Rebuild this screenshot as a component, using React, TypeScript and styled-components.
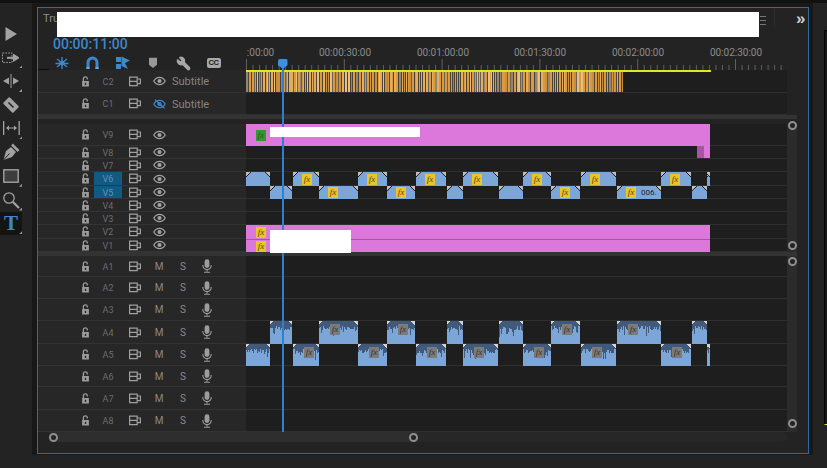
import React from "react";
import styled, { createGlobalStyle } from "styled-components";
import { Wrench } from "lucide-react";

const GlobalStyle = createGlobalStyle`
  html, body { margin: 0; padding: 0; background: #181818; }
  * { box-sizing: border-box; }
`;

const FONT = `Roboto, "Liberation Sans", sans-serif`;
const BLUE = "#3f87cc";
const GREY = "#a2a2a2";

const Page = styled.div`
  width: 827px; height: 468px; overflow: hidden;
  display: flex; flex-direction: column;
  background: #181818; font-family: ${FONT};
`;
const TopStrip = styled.div`
  height: 3px; flex: none; background: #111;
`;
const Main = styled.div`
  flex: none; height: 452px; display: flex;
`;
const BottomBar = styled.div`
  flex: 1; background: #232323;
`;

/* Tool rail */
const Rail = styled.nav`
  width: 32px; flex: none; margin-right: 5px; padding-top: 19px;
  background: #232323;
  display: flex; flex-direction: column;
`;
const Tool = styled.div<{ $active?: boolean; $corner?: boolean }>`
  width: 22px; height: 23.7px; position: relative;
  display: flex; align-items: center; justify-content: center;
  background: ${(p) => (p.$active ? "#141414" : "transparent")};
  &::after {
    content: ${(p) => (p.$corner ? '""' : "none")};
    position: absolute; right: 0; bottom: 1px;
    width: 3px; height: 3px; background: #999;
    clip-path: polygon(100% 0, 100% 100%, 0 100%);
  }
`;
const TextTool = styled.span`
  font: bold 21px "Liberation Serif", serif; color: ${BLUE}; line-height: 1;
`;

/* Panel */
const Panel = styled.section`
  width: 772px; height: 447px; flex: none; margin-top: 4px;
  border: 1px solid #2d6ca3; background: #232323;
  display: flex; flex-direction: column;
`;
const PanelHeader = styled.header`
  height: 29px; flex: none; padding: 4px 0 0 5px;
  display: flex; align-items: flex-start;
`;
const PanelTitle = styled.span`
  width: 14px; flex: none; font-size: 11px; line-height: 14px; color: #8d8d8d; white-space: nowrap;
`;
const Redaction = styled.div`
  width: 702px; height: 25px; background: #fff; flex: none;
`;
const MenuLines = styled.div`
  width: 6px; height: 9px; margin: 4px 0 0 1px; flex: none;
  border-top: 1px solid #777; border-bottom: 1px solid #777; position: relative;
  &::after { content: ""; position: absolute; left: 0; right: 0; top: 3px; height: 1px; background: #777; }
`;
const HeaderRule = styled.div`
  width: 1px; height: 19px; margin: -4px 0 0 8px; background: #2c2c2c; flex: none;
`;
const Overflow = styled.span`
  margin: -3px 0 0 21px; font: bold 17px/20px "Liberation Sans", sans-serif; color: #cfcfcf;
`;

const Timeline = styled.div`
  position: relative; flex: none;
`;
const TimeRow = styled.div`
  height: 33px; display: flex; position: relative;
  &::before { content: ""; position: absolute; left: 0; bottom: 0; width: 11px; height: 1px; background: #0c0c0c; }
`;
const TimeControls = styled.div`
  width: 208px; flex: none; padding-left: 15px;
`;
const Timecode = styled.div`
  color: ${BLUE}; font-size: 14px; font-weight: 500; line-height: 14px;
`;
const ControlIcons = styled.div`
  margin-top: 4px; margin-left: -6px; display: flex; align-items: center;
`;
const ControlIcon = styled.div`
  width: 30.3px; height: 16px; flex: none; display: flex; align-items: center; justify-content: center;
`;
const CCBadge = styled.span`
  width: 14px; height: 10px; border-radius: 2px; background: #a8a8a8;
  color: #222; font: bold 7.5px/10px "Liberation Sans", sans-serif; text-align: center; letter-spacing: -.2px;
`;
const Ruler = styled.div`
  width: 541px; flex: none; position: relative; overflow: hidden;
`;
const RulerLabel = styled.span`
  position: absolute; top: 10px; transform: translateX(-50%);
  font-size: 10px; line-height: 12px; color: #8c8c8c; white-space: nowrap;
`;
const RulerTicks = styled.svg`
  position: absolute; left: 0; bottom: 0; display: block;
`;

const Section = styled.div`
  display: flex; flex: none;
`;
const Rows = styled.div`
  width: 749px; flex: none; display: flex; flex-direction: column;
`;
const Gutter = styled.div`
  width: 10px; flex: none; background: #2b2b2b;
  display: flex; flex-direction: column; justify-content: space-between; align-items: center;
`;
const Knob = styled.span`
  display: block; width: 9px; height: 9px; flex: none; border-radius: 50%;
  border: 2px solid #8f8f8f; background: #232323;
`;
const TopKnob = styled(Knob)<{ $gap: number }>`
  margin-top: ${(p) => p.$gap}px;
`;
const BottomKnob = styled(Knob)<{ $gap: number }>`
  margin-bottom: ${(p) => p.$gap}px;
`;
const Band = styled.div<{ $h: number }>`
  height: ${(p) => p.$h}px; flex: none; width: 759px;
  border-top: 4px solid #333;
`;

const Row = styled.div<{ $h: number }>`
  height: ${(p) => p.$h}px; display: flex; flex: none;
`;
const Head = styled.div`
  width: 208px; flex: none; padding-left: 36px;
  background: #272727; border-bottom: 1px solid #333;
  display: flex; align-items: center;
`;
const Lane = styled.div`
  width: 541px; flex: none; position: relative;
  background: #1e1e1e; border-bottom: 1px solid #2f2f2f;
`;
const LockCell = styled.div`
  width: 20px; flex: none; padding-left: 7px; display: flex;
`;
const TrackLabel = styled.div<{ $on?: boolean }>`
  width: 28px; height: 100%; flex: none; text-align: center;
  display: flex; align-items: center; justify-content: center;
  font-size: 9px; padding-top: 1px; color: ${(p) => (p.$on ? "#5d93b4" : "#6e6e6e")};
  background: ${(p) => (p.$on ? "#135a83" : "transparent")};
`;
const CamCell = styled.div`
  width: 24px; flex: none; margin-left: 1px; display: flex; justify-content: center;
`;
const ToggleCell = styled.div`
  width: 24px; flex: none; display: flex; justify-content: center; align-items: center;
  font-size: 10px; color: #8a8a8a;
`;
const TrackName = styled.span`
  font-size: 11px; color: #858585; margin-left: 1px; padding-top: 1px;
`;

/* Clips */
const Clip = styled.div`
  position: absolute; top: 0; bottom: -1px; overflow: hidden;
  display: flex; align-items: center;
  background: #7ca5d8;
  &::before, &::after {
    content: ""; position: absolute; top: 0; width: 6px; height: 6px; z-index: 1;
  }
  &::before { left: 0; background: linear-gradient(135deg, #bdbdbd 34%, #1e1e1e 34% 44%, transparent 44%); }
  &::after { right: 0; background: linear-gradient(225deg, #bdbdbd 34%, #1e1e1e 34% 44%, transparent 44%); }
`;
const AudioClipBox = styled(Clip)`
  &::before, &::after { width: 4px; height: 4px; }
  &::before { background: linear-gradient(135deg, #d4d4d4 50%, transparent 50%); }
  &::after { background: linear-gradient(225deg, #d4d4d4 50%, transparent 50%); }
`;
const Fx = styled.span<{ $tone: "yellow" | "green" | "grey" }>`
  width: 10px; height: 11px; flex: none; position: relative; z-index: 1;
  font: italic 9px/11px "Liberation Serif", serif; text-align: center;
  color: ${(p) => (p.$tone === "grey" ? "#333" : "#5a4700")};
  background: ${(p) => (p.$tone === "yellow" ? "#e6c52f" : p.$tone === "green" ? "#2b9a34" : "#7b7b7b")};
`;
const ClipFx = styled(Fx)`
  margin-left: 9px;
`;
const AudioFx = styled(Fx)`
  align-self: flex-start; margin: 3px 0 0 11px;
`;
const ClipName = styled.span`
  margin-left: 5px; font-size: 8px; color: #15233a;
`;
const Wave = styled.svg`
  position: absolute; left: 0; top: 0; display: block;
`;
const PinkClip = styled.div`
  position: absolute; left: 0; width: 464px; top: 0; bottom: -1px;
  background: #dc78dc; padding-left: 10px;
  display: flex; align-items: center;
`;
const PinkLower = styled(PinkClip)`
  border-top: 1px solid #a4579f;
`;
const PinkTail = styled.div`
  position: absolute; left: 451px; width: 13px; top: 0; bottom: 0;
  background: linear-gradient(90deg, #a856a4 54%, #dc78dc 54%);
`;
const Mask = styled.div`
  position: absolute; background: #fff; z-index: 3;
`;
const TitleMask = styled(Mask)`
  left: 24px; top: 3px; width: 150px; height: 10px;
`;
const StackMask = styled(Mask)`
  left: 24px; top: 5px; width: 81px; height: 23px;
`;
const Stripes = styled.svg`
  position: absolute; left: 0; top: 0; display: block;
`;

const Playhead = styled.div`
  position: absolute; left: 244px; top: 22px; width: 1.5px; height: 373px; background: #2f7fd1; z-index: 2;
`;
const PlayheadFlag = styled.div`
  position: absolute; left: -4px; top: 0; width: 9.5px; height: 9px; background: #3d8fe0; border-radius: 2px 2px 0 0;
  clip-path: polygon(0 0, 100% 0, 100% 70%, 60% 100%, 40% 100%, 0 70%);
`;

/* Horizontal scrollbar */
const HScroll = styled.div`
  height: 10px; margin-left: 11px; width: 738px; flex: none; display: flex; background: #272727; border-radius: 0 5px 5px 0;
`;
const HThumb = styled.div`
  width: 369px; flex: none; background: #2e2e2e; display: flex; justify-content: space-between; align-items: center;
`;

/* Right dock */
const RightDock = styled.aside`
  flex: 1; margin-left: 4px; background: #232323; padding: 27px 0 0 11px;
`;
const DockFrame = styled.div`
  height: 395px; background: #161616; border-left: 1px solid #050505; border-top: 1px solid #050505; border-bottom: 1px solid #e4e43a;
`;

/* ---------- icons ---------- */
const Lock = () => (
  <svg width="9" height="11" viewBox="0 0 10 13">
    <path d="M2.500 6V3.200a2.300 2.300 0 0 1 4.600 0V4" fill="none" stroke="#9c9c9c" strokeWidth="1.500" />
    <path fillRule="evenodd" d="M1 6h8v6.500H1z M4.200 8v2.500h1.600V8z" fill="#9c9c9c" />
  </svg>
);
const Cam = () => (
  <svg width="12" height="11" viewBox="0 0 12 11" fill="none" stroke="#a0a0a0" strokeWidth="1.200">
    <path d="M.6 1.200h7.600v8.400H.6zM.6 5.400h7.600M8.200 3h3.200v4.600H8.200" />
  </svg>
);
const Eye = ({ off }: { off?: boolean }) => {
  const c = off ? "#3d86c8" : "#a2a2a2";
  return (
    <svg width="13" height="10" viewBox="0 0 13 10">
      <path d="M.8 5C2.200 2.600 4.200 1.400 6.500 1.400S10.800 2.600 12.200 5C10.800 7.400 8.800 8.600 6.500 8.600S2.200 7.400.8 5z" fill="none" stroke={c} strokeWidth="1.300" />
      <circle cx="6.500" cy="5" r="2.100" fill={c} />
      {off && <path d="M2 .8l9.500 8.400" stroke={c} strokeWidth="1.300" />}
    </svg>
  );
};
const Mic = () => (
  <svg width="10" height="14" viewBox="0 0 10 14">
    <rect x="2.600" y=".3" width="4.800" height="8.600" rx="2.400" fill="#9c9c9c" />
    <path d="M.8 6c0 3 1.800 4.600 4.200 4.600S9.200 9 9.200 6M5 10.600v2M2 13.200h6" fill="none" stroke="#9c9c9c" strokeWidth="1.100" />
  </svg>
);

const toolIcons: { node: React.ReactNode; corner?: boolean; active?: boolean }[] = [
  { node: <svg width="14" height="16" viewBox="0 0 14 16"><path d="M1.500 1v14L13 8z" fill={GREY} /></svg> },
  { corner: true, node: (
    <svg width="18" height="12" viewBox="0 0 18 12" fill="none" stroke={GREY}>
      <rect x=".5" y="1" width="9.500" height="9.500" strokeDasharray="1.600 1.300" />
      <path d="M5 5.800h7" strokeWidth="2" /><path d="M11.500 2.300l5.500 3.500-5.500 3.500z" fill={GREY} />
    </svg>) },
  { corner: true, node: (
    <svg width="18" height="14" viewBox="0 0 18 14" fill={GREY}>
      <path d="M8.500 0h1v14h-1zM7 3.500v7L1 7zM11 3.500v7L17 7z" />
    </svg>) },
  { node: (
    <svg width="18" height="18" viewBox="0 0 18 18">
      <rect x="4.500" y="2" width="9" height="14" rx="1" fill={GREY} transform="rotate(-45 9 9)" />
      <path d="M6.500 6.500l5 5" stroke="#232323" strokeWidth="1.500" />
    </svg>) },
  { corner: true, node: (
    <svg width="19" height="16" viewBox="0 0 19 16" fill={GREY}>
      <path d="M1 0h1.300v14H1zM16.500 0h1.300v14h-1.300zM4 7l3-2.500v2h5v-2L15 7l-3 2.500v-2H7v2z" />
    </svg>) },
  { node: (
    <svg width="18" height="18" viewBox="0 0 18 18">
      <path d="M1.500 17L4 8l5-4 5 5-4 5z" fill={GREY} />
      <path d="M10 1.500L16.500 8" stroke={GREY} strokeWidth="2.500" />
      <path d="M1.500 17L7.500 10.500" stroke="#232323" strokeWidth="1" />
    </svg>) },
  { corner: true, node: <svg width="16" height="14" viewBox="0 0 16 14"><rect x=".8" y=".8" width="14.400" height="12.400" fill="#3d3d3d" stroke={GREY} strokeWidth="1.400" /></svg> },
  { corner: true, node: (
    <svg width="18" height="18" viewBox="0 0 18 18" fill="none" stroke={GREY}>
      <circle cx="7" cy="7" r="5.200" strokeWidth="1.300" /><path d="M11 11l6 6" strokeWidth="2.200" />
    </svg>) },
  { corner: true, active: true, node: <TextTool>T</TextTool> },
];

const controls: React.ReactNode[] = [
  <svg width="14" height="14" viewBox="0 0 14 14" stroke={BLUE} strokeWidth="1.300" fill={BLUE}>
    <path d="M7 1v12M2 3l10 8M2 11L12 3M.5 7.500h13" fill="none" /><circle cx="7" cy="7" r="1.800" />
  </svg>,
  <svg width="13" height="14" viewBox="0 0 13 14" fill="none">
    <path d="M2 13V6.500a4.500 4.500 0 0 1 9 0V13" stroke={BLUE} strokeWidth="3" />
    <path d="M.5 12h3M9.500 12h3" stroke="#6aa9e6" strokeWidth="2" />
  </svg>,
  <svg width="14" height="14" viewBox="0 0 14 14" fill={BLUE}>
    <path d="M0 1h5v5H0zM0 8h5v5H0zM5.500 .5L14 4.500 9 7l3 6-6.500-3z" />
  </svg>,
  <svg width="10" height="12" viewBox="0 0 10 12" fill="#989898"><path d="M1 .8h8v7L5 11 1 7.800z" /></svg>,
  <Wrench size={15} color="#a8a8a8" fill="#a8a8a8" style={{ transform: "scaleX(-1)" }} />,
  <CCBadge>CC</CCBadge>,
];

/* ---------- data ---------- */
const rng = (seed: number) => () => {
  seed = (seed * 9301 + 49297) % 233280;
  return seed / 233280;
};

const stripeColors = ["#d99a42", "#d99a42", "#d99a42", "#e3ad5c", "#e3ad5c", "#e9c082", "#c98f3c", "#8f8676"];
const stripes = (() => {
  const r = rng(17);
  const out: { x: number; w: number; c: string }[] = [];
  let x = 0;
  while (x < 377) {
    const w = r() < 0.5 ? 1 : 2;
    out.push({ x, w, c: stripeColors[Math.floor(r() * stripeColors.length)] });
    x += w;
    if (r() < 0.7 && x < 377) {
      out.push({ x, w: 1, c: r() < 0.6 ? "#4c4234" : "#6b6153" });
      x += 1;
    }
  }
  return out;
})();

type ClipDef = { x: number; w: number; fx?: boolean; name?: string };
const upper: ClipDef[] = [
  { x: 0, w: 24 }, { x: 47, w: 26, fx: true }, { x: 112, w: 29, fx: true }, { x: 170, w: 30, fx: true },
  { x: 217, w: 35, fx: true }, { x: 277, w: 28, fx: true }, { x: 335, w: 35, fx: true }, { x: 415, w: 30, fx: true }, { x: 461, w: 3 },
];
const lower: ClipDef[] = [
  { x: 24, w: 22 }, { x: 73, w: 39, fx: true }, { x: 141, w: 28, fx: true }, { x: 201, w: 16 },
  { x: 253, w: 24 }, { x: 305, w: 29, fx: true }, { x: 371, w: 44, fx: true, name: "006." }, { x: 446, w: 15 },
];

const VideoClips = ({ clips }: { clips: ClipDef[] }) => (
  <>
    {clips.map((c) => (
      <Clip key={c.x} style={{ left: c.x, width: c.w }}>
        {c.fx && <ClipFx $tone="yellow">fx</ClipFx>}
        {c.name && <ClipName>{c.name}</ClipName>}
      </Clip>
    ))}
  </>
);

const AudioClips = ({ clips, seed }: { clips: ClipDef[]; seed: number }) => {
  const r = rng(seed);
  return (
    <>
      {clips.map((c) => {
        const bars = Array.from({ length: c.w }, () => 5 + Math.floor(r() * 5) + (r() < 0.2 ? Math.floor(r() * 8) : 0));
        return (
          <AudioClipBox key={c.x} style={{ left: c.x, width: c.w }}>
            <Wave width={c.w} height="23">
              {bars.map((h, i) => (
                <rect key={i} x={i} y="0" width="1" height={h} fill="#41597b" />
              ))}
            </Wave>
            {c.fx && <AudioFx $tone="grey">fx</AudioFx>}
          </AudioClipBox>
        );
      })}
    </>
  );
};

const videoRows: { name: string; h: number; on?: boolean }[] = [
  { name: "V9", h: 22 }, { name: "V8", h: 13 }, { name: "V7", h: 13 }, { name: "V6", h: 14, on: true },
  { name: "V5", h: 13, on: true }, { name: "V4", h: 13 }, { name: "V3", h: 13 }, { name: "V2", h: 14 }, { name: "V1", h: 13 },
];
const audioRows: { name: string; h: number }[] = [
  { name: "A1", h: 21 }, { name: "A2", h: 22 }, { name: "A3", h: 22 }, { name: "A4", h: 23 },
  { name: "A5", h: 22 }, { name: "A6", h: 21 }, { name: "A7", h: 23 }, { name: "A8", h: 22 },
];

const rulerMarks = [
  { x: 14.5, t: ":00:00" }, { x: 99, t: "00:00:30:00" }, { x: 197, t: "00:01:00:00" },
  { x: 294, t: "00:01:30:00" }, { x: 392, t: "00:02:00:00" }, { x: 490, t: "00:02:30:00" },
];

const videoLane = (name: string) => {
  switch (name) {
    case "V9":
      return <PinkClip><Fx $tone="green">fx</Fx><TitleMask /></PinkClip>;
    case "V8":
      return <PinkTail />;
    case "V6":
      return <VideoClips clips={upper} />;
    case "V5":
      return <VideoClips clips={lower} />;
    case "V2":
      return <PinkClip><Fx $tone="yellow">fx</Fx><StackMask /></PinkClip>;
    case "V1":
      return <PinkLower><Fx $tone="yellow">fx</Fx></PinkLower>;
    default:
      return null;
  }
};

export default function App() {
  return (
    <Page>
      <GlobalStyle />
      <TopStrip />
      <Main>
        <Rail>
          {toolIcons.map((t, i) => (
            <Tool key={i} $corner={t.corner} $active={t.active}>{t.node}</Tool>
          ))}
        </Rail>
        <Panel>
          <PanelHeader>
            <PanelTitle>Tru</PanelTitle>
            <Redaction />
            <MenuLines />
            <HeaderRule />
            <Overflow>»</Overflow>
          </PanelHeader>
          <Timeline>
            <TimeRow>
              <TimeControls>
                <Timecode>00:00:11:00</Timecode>
                <ControlIcons>
                  {controls.map((c, i) => <ControlIcon key={i}>{c}</ControlIcon>)}
                </ControlIcons>
              </TimeControls>
              <Ruler>
                {rulerMarks.map((m) => <RulerLabel key={m.x} style={{ left: m.x }}>{m.t}</RulerLabel>)}
                <RulerTicks width="541" height="11">
                  {Array.from({ length: 84 }, (_, i) => (
                    <rect key={i} x={i * 6.52} y={i % 15 === 0 ? 0 : 6} width="1" height={i % 15 === 0 ? 11 : 5} fill="#5f5f5f" />
                  ))}
                </RulerTicks>
              </Ruler>
            </TimeRow>

            <Section>
              <Rows>
                {[{ n: "C2", h: 23 }, { n: "C1", h: 22 }].map((t) => (
                  <Row key={t.n} $h={t.h}>
                    <Head>
                      <LockCell><Lock /></LockCell>
                      <TrackLabel>{t.n}</TrackLabel>
                      <CamCell><Cam /></CamCell>
                      <ToggleCell><Eye off={t.n === "C1"} /></ToggleCell>
                      <TrackName>Subtitle</TrackName>
                    </Head>
                    <Lane>
                      {t.n === "C2" && (
                        <Stripes width="541" height="22">
                          {stripes.map((s) => <rect key={s.x} x={s.x} y="1" width={s.w} height="21" fill={s.c} />)}
                          <rect x="0" y="0" width="465" height="2" fill="#e6e61e" />
                        </Stripes>
                      )}
                    </Lane>
                  </Row>
                ))}
              </Rows>
            </Section>
            <Band $h={9} />

            <Section>
              <Rows>
                {videoRows.map((t) => (
                  <Row key={t.name} $h={t.h}>
                    <Head>
                      <LockCell><Lock /></LockCell>
                      <TrackLabel $on={t.on}>{t.name}</TrackLabel>
                      <CamCell><Cam /></CamCell>
                      <ToggleCell><Eye /></ToggleCell>
                    </Head>
                    <Lane>{videoLane(t.name)}</Lane>
                  </Row>
                ))}
              </Rows>
              <Gutter>
                <TopKnob $gap={-3.5} />
                <BottomKnob $gap={2} />
              </Gutter>
            </Section>
            <Band $h={4} />

            <Section>
              <Rows>
                {audioRows.map((t) => (
                  <Row key={t.name} $h={t.h}>
                    <Head>
                      <LockCell><Lock /></LockCell>
                      <TrackLabel>{t.name}</TrackLabel>
                      <CamCell><Cam /></CamCell>
                      <ToggleCell>M</ToggleCell>
                      <ToggleCell>S</ToggleCell>
                      <ToggleCell><Mic /></ToggleCell>
                    </Head>
                    <Lane>
                      {t.name === "A4" && <AudioClips clips={lower} seed={5} />}
                      {t.name === "A5" && <AudioClips clips={upper} seed={29} />}
                    </Lane>
                  </Row>
                ))}
              </Rows>
              <Gutter>
                <TopKnob $gap={1} />
                <BottomKnob $gap={4} />
              </Gutter>
            </Section>
            <Playhead><PlayheadFlag /></Playhead>
          </Timeline>
          <HScroll>
            <HThumb>
              <Knob />
              <Knob />
            </HThumb>
          </HScroll>
        </Panel>
        <RightDock>
          <DockFrame />
        </RightDock>
      </Main>
      <BottomBar />
    </Page>
  );
}
